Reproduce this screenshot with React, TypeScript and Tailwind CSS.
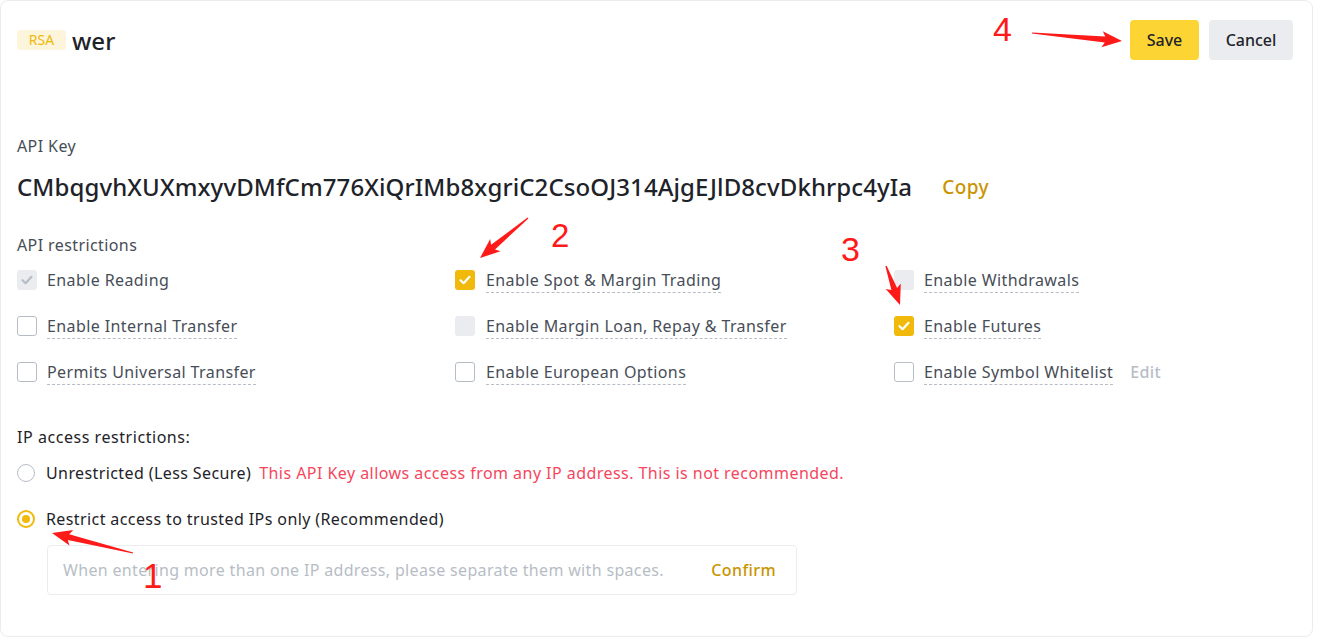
import React from "react";

type Pt = [number, number];

function arrowPoints(tail: Pt, tip: Pt, head = 17, barb = 8, neckW = 3, tailW = 0.6): string {
  const dx = tip[0] - tail[0];
  const dy = tip[1] - tail[1];
  const len = Math.hypot(dx, dy);
  const ux = dx / len;
  const uy = dy / len;
  const nx = -uy;
  const ny = ux;
  const neck: Pt = [tip[0] - ux * head, tip[1] - uy * head];
  const barbBase: Pt = [tip[0] - ux * (head + 3), tip[1] - uy * (head + 3)];
  const pts: Pt[] = [
    [tail[0] + nx * tailW, tail[1] + ny * tailW],
    [neck[0] + nx * neckW, neck[1] + ny * neckW],
    [barbBase[0] + nx * barb, barbBase[1] + ny * barb],
    tip,
    [barbBase[0] - nx * barb, barbBase[1] - ny * barb],
    [neck[0] - nx * neckW, neck[1] - ny * neckW],
    [tail[0] - nx * tailW, tail[1] - ny * tailW],
  ];
  return pts.map((p) => `${p[0].toFixed(1)},${p[1].toFixed(1)}`).join(" ");
}

type BoxState = "checked" | "unchecked" | "disabledChecked" | "disabled";

function Check({ color }: { color: string }) {
  return (
    <svg width="14" height="14" viewBox="0 0 14 14" fill="none">
      <path d="M2.5 7.2 L5.6 10.2 L11.5 3.8" stroke={color} strokeWidth="2.2" strokeLinecap="round" strokeLinejoin="round" />
    </svg>
  );
}

function Box({ state }: { state: BoxState }) {
  if (state === "checked")
    return (
      <span className="w-5 h-5 rounded-[3px] bg-[#f0b90b] flex items-center justify-center shrink-0">
        <Check color="#ffffff" />
      </span>
    );
  if (state === "disabledChecked")
    return (
      <span className="w-5 h-5 rounded-[3px] bg-[#eaecef] flex items-center justify-center shrink-0">
        <Check color="#b7bdc6" />
      </span>
    );
  if (state === "disabled") return <span className="w-5 h-5 rounded-[3px] bg-[#eaecef] shrink-0" />;
  return <span className="w-5 h-5 rounded-[3px] border border-[#b7bdc6] bg-white shrink-0" />;
}

function Item({ state, label, dashed = true, extra, gap = "gap-[10px]" }: { state: BoxState; label: string; dashed?: boolean; extra?: React.ReactNode; gap?: string }) {
  return (
    <div className={`flex items-center h-6 ${gap}`}>
      <Box state={state} />
      <span className={`text-[16px] leading-6 text-[#474d57] ${dashed ? "border-b border-dashed border-[#b7bdc6]" : ""}`}>{label}</span>
      {extra}
    </div>
  );
}

export default function App() {
  const font = { fontFamily: '"Noto Sans", "Open Sans", Arial, sans-serif' };
  return (
    <div className="relative w-[1324px] h-[641px] bg-white overflow-hidden tracking-[0.4px]" style={font}>
      <div className="w-[1313px] h-[637px] border border-[#eaecef] rounded-[8px] pl-4 pr-[19px] pt-[19px] flex flex-col">
        <div className="flex items-center justify-between h-10">
          <div className="flex items-center gap-[6px]">
            <span className="w-[49px] h-5 rounded-[3px] bg-[#fdf4dc] text-[#f0b90b] text-[14px] leading-5 tracking-normal flex items-center justify-center">RSA</span>
            <span className="text-[24px] leading-8 font-medium text-[#1e2329] mt-[2px] tracking-normal">wer</span>
          </div>
          <div className="flex items-center gap-[10px] tracking-normal">
            <button className="w-[69px] h-10 rounded-[4px] bg-[#fcd535] text-[16px] font-medium text-[#1e2329]">Save</button>
            <button className="w-[84px] h-10 rounded-[4px] bg-[#eaecef] text-[16px] font-medium text-[#1e2329]">Cancel</button>
          </div>
        </div>

        <div className="mt-[74px] text-[16px] leading-6 text-[#474d57]">API Key</div>
        <div className="mt-[15px] flex items-center h-7">
          <span className="text-[24px] leading-7 font-medium text-[#1e2329] tracking-[0.1px]">CMbqgvhXUXmxyvDMfCm776XiQrIMb8xgriC2CsoOJ314AjgEJlD8cvDkhrpc4yIa</span>
          <span className="ml-[30px] text-[19px] leading-7 font-medium text-[#c99400]">Copy</span>
        </div>

        <div className="mt-[32px] text-[16px] leading-6 text-[#474d57]">API restrictions</div>
        <div className="mt-[11px] grid grid-cols-[438px_439px_1fr] gap-y-[22px]">
          <Item state="disabledChecked" label="Enable Reading" dashed={false} />
          <Item state="checked" label="Enable Spot & Margin Trading" gap="gap-[11px]" />
          <Item state="disabled" label="Enable Withdrawals" />
          <Item state="unchecked" label="Enable Internal Transfer" />
          <Item state="disabled" label="Enable Margin Loan, Repay & Transfer" gap="gap-[11px]" />
          <Item state="checked" label="Enable Futures" />
          <Item state="unchecked" label="Permits Universal Transfer" />
          <Item state="unchecked" label="Enable European Options" gap="gap-[11px]" />
          <Item
            state="unchecked"
            label="Enable Symbol Whitelist"
            extra={<span className="ml-[7px] text-[16px] font-medium text-[#b7bdc6]">Edit</span>}
          />
        </div>

        <div className="mt-[41px] text-[16px] leading-6 text-[#1e2329] tracking-[0.55px]">IP access restrictions:</div>
        <div className="mt-[12px] flex items-center h-6 gap-[11px]">
          <span className="w-[18px] h-[18px] rounded-full border border-[#b7bdc6] bg-white shrink-0" />
          <span className="text-[16px] leading-6 text-[#1e2329]">Unrestricted (Less Secure)</span>
          <span className="ml-[-3px] text-[16px] leading-6 text-[#f6465d] tracking-[0.45px]">This API Key allows access from any IP address. This is not recommended.</span>
        </div>
        <div className="mt-[22px] flex items-center h-6 gap-[11px]">
          <span className="w-[18px] h-[18px] rounded-full border-2 border-[#f0b90b] bg-white shrink-0 flex items-center justify-center">
            <span className="w-2 h-2 rounded-full bg-[#f0b90b]" />
          </span>
          <span className="text-[16px] leading-6 text-[#1e2329]">Restrict access to trusted IPs only (Recommended)</span>
        </div>
        <div className="mt-[14px] ml-[30px] w-[750px] h-[50px] border border-[#eaecef] rounded-[4px] flex items-center justify-between pl-[15px] pr-[20px]">
          <span className="text-[16px] text-[#b7bdc6] tracking-[0.33px]">When entering more than one IP address, please separate them with spaces.</span>
          <span className="text-[16px] font-medium text-[#c99400]">Confirm</span>
        </div>
      </div>

      <svg className="absolute inset-0 pointer-events-none" width="1324" height="641">
        <polygon points={arrowPoints([1032, 33], [1122, 41])} fill="#ff1a1a" />
        <polygon points={arrowPoints([528, 218], [480, 258])} fill="#ff1a1a" />
        <polygon points={arrowPoints([886, 266], [900, 305])} fill="#ff1a1a" />
        <polygon points={arrowPoints([133, 553], [52, 533])} fill="#ff1a1a" />
      </svg>
      <span className="absolute left-[993px] top-[12px] text-[34px] leading-[34px] tracking-normal text-[#ff1a1a] pointer-events-none" style={{ fontFamily: '"Liberation Sans", Arial, sans-serif' }}>4</span>
      <span className="absolute left-[551px] top-[219px] text-[33px] leading-[33px] tracking-normal text-[#ff1a1a] pointer-events-none" style={{ fontFamily: '"Liberation Sans", Arial, sans-serif' }}>2</span>
      <span className="absolute left-[841px] top-[232px] text-[34px] leading-[34px] tracking-normal text-[#ff1a1a] pointer-events-none" style={{ fontFamily: '"Liberation Sans", Arial, sans-serif' }}>3</span>
      <span className="absolute left-[143px] top-[558px] text-[35px] leading-[35px] tracking-normal text-[#ff1a1a] pointer-events-none" style={{ fontFamily: '"Liberation Sans", Arial, sans-serif' }}>1</span>
    </div>
  );
}
